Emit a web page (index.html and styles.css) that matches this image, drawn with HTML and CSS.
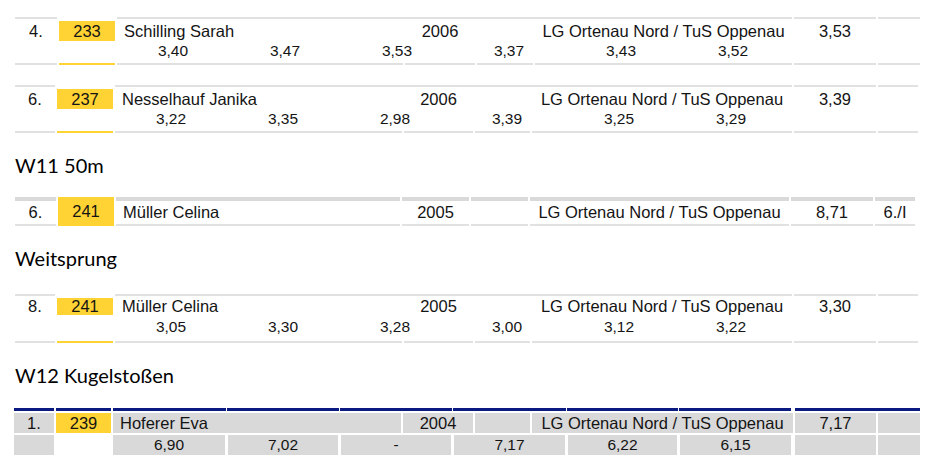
FILE: index.html
```html
<!DOCTYPE html>
<html lang="de">
<head>
<meta charset="utf-8">
<title>Ergebnisse</title>
<link rel="stylesheet" href="styles.css">
</head>
<body>
<main class="page">

  <section class="res b1">
    <span class="rule top c1"></span>
    <span class="rule top c3to6"></span>
    <span class="rule top c7"></span>
    <span class="rule top c8"></span>
    <div class="cell rank">4.</div>
    <div class="cell bib">233</div>
    <div class="cell name">Schilling Sarah</div>
    <div class="cell year">2006</div>
    <div class="cell gap"></div>
    <div class="cell club">LG Ortenau Nord / TuS Oppenau</div>
    <div class="cell best">3,53</div>
    <div class="cell extra"></div>
    <div class="attempts"><span>3,40</span><span>3,47</span><span>3,53</span><span>3,37</span><span>3,43</span><span>3,52</span></div>
    <span class="rule bot c1"></span>
    <span class="rule bot c2 yel"></span>
    <span class="rule bot c3"></span>
    <span class="rule bot c4"></span>
    <span class="rule bot c5"></span>
    <span class="rule bot c6"></span>
    <span class="rule bot c7"></span>
    <span class="rule bot c8"></span>
  </section>

  <section class="res b2">
    <span class="rule top c1"></span>
    <span class="rule top c3to6"></span>
    <span class="rule top c7"></span>
    <span class="rule top c8"></span>
    <div class="cell rank">6.</div>
    <div class="cell bib">237</div>
    <div class="cell name">Nesselhauf Janika</div>
    <div class="cell year">2006</div>
    <div class="cell gap"></div>
    <div class="cell club">LG Ortenau Nord / TuS Oppenau</div>
    <div class="cell best">3,39</div>
    <div class="cell extra"></div>
    <div class="attempts"><span>3,22</span><span>3,35</span><span>2,98</span><span>3,39</span><span>3,25</span><span>3,29</span></div>
    <span class="rule bot c1"></span>
    <span class="rule bot c2 yel"></span>
    <span class="rule bot c3"></span>
    <span class="rule bot c4"></span>
    <span class="rule bot c5"></span>
    <span class="rule bot c6"></span>
    <span class="rule bot c7"></span>
    <span class="rule bot c8"></span>
  </section>

  <h2 class="heading">W11 50m</h2>

  <section class="res b3">
    <span class="rule top c1"></span>
    <span class="rule top c3"></span>
    <span class="rule top c4"></span>
    <span class="rule top c5"></span>
    <span class="rule top c6"></span>
    <span class="rule top c7"></span>
    <span class="rule top c8"></span>
    <div class="cell rank">6.</div>
    <div class="cell bib">241</div>
    <div class="cell name">Müller Celina</div>
    <div class="cell year">2005</div>
    <div class="cell gap"></div>
    <div class="cell club">LG Ortenau Nord / TuS Oppenau</div>
    <div class="cell best">8,71</div>
    <div class="cell extra">6./I</div>
    <span class="rule bot c1"></span>
    <span class="rule bot c3"></span>
    <span class="rule bot c4"></span>
    <span class="rule bot c5"></span>
    <span class="rule bot c6"></span>
    <span class="rule bot c7"></span>
    <span class="rule bot c8"></span>
  </section>

  <h2 class="heading">Weitsprung</h2>

  <section class="res b4">
    <span class="rule top c1"></span>
    <span class="rule top c3to6"></span>
    <span class="rule top c7"></span>
    <span class="rule top c8"></span>
    <div class="cell rank">8.</div>
    <div class="cell bib">241</div>
    <div class="cell name">Müller Celina</div>
    <div class="cell year">2005</div>
    <div class="cell gap"></div>
    <div class="cell club">LG Ortenau Nord / TuS Oppenau</div>
    <div class="cell best">3,30</div>
    <div class="cell extra"></div>
    <div class="attempts"><span>3,05</span><span>3,30</span><span>3,28</span><span>3,00</span><span>3,12</span><span>3,22</span></div>
    <span class="rule bot c1"></span>
    <span class="rule bot c2 yel"></span>
    <span class="rule bot c3"></span>
    <span class="rule bot c4"></span>
    <span class="rule bot c5"></span>
    <span class="rule bot c6"></span>
    <span class="rule bot c7"></span>
    <span class="rule bot c8"></span>
  </section>

  <h2 class="heading">W12 Kugelstoßen</h2>

  <section class="res b5">
    <span class="nav c1"></span>
    <span class="nav c2"></span>
    <div class="navsplit"><span></span><span></span><span></span><span></span><span></span><span></span></div>
    <span class="nav c7to8"></span>
    <div class="cell rank">1.</div>
    <div class="cell bib">239</div>
    <div class="cell name">Hoferer Eva</div>
    <div class="cell year">2004</div>
    <div class="cell gap"></div>
    <div class="cell club">LG Ortenau Nord / TuS Oppenau</div>
    <div class="cell best">7,17</div>
    <div class="cell extra"></div>
    <div class="sub c1"></div>
    <div class="attempts"><span>6,90</span><span>7,02</span><span>-</span><span>7,17</span><span>6,22</span><span>6,15</span></div>
    <div class="sub c7"></div>
    <div class="sub c8"></div>
  </section>

</main>
</body>
</html>
```

FILE: styles.css
```css
* { box-sizing: border-box; }

html, body {
  margin: 0;
  padding: 0;
  background: #ffffff;
}

body {
  width: 940px;
  height: 474px;
  overflow: hidden;
  font-family: "Liberation Sans", Arial, sans-serif;
  color: #141414;
}

.page {
  display: flex;
  flex-direction: column;
  padding-top: 17px;
}

/* ---------- headings ---------- */
.heading {
  margin: 20px 0 0 15px;
  font-family: Lato, "Open Sans", sans-serif;
  font-weight: 400;
  font-size: 20px;
  line-height: 24px;
  height: 24px;
  color: #000;
}

/* ---------- result blocks ---------- */
.res {
  display: grid;
  column-gap: 2px;
  align-items: stretch;
}

.res + .res { margin-top: 20px; }
.heading + .res { margin-top: 20px; }

.cell {
  grid-row: 2;
  font-size: 16.5px;
  line-height: 20px;
  text-align: center;
  white-space: nowrap;
}

.rank  { grid-column: 1; }
.bib   { grid-column: 2; background: #ffd333; }
.name  { grid-column: 3; text-align: left; padding-left: 7px; }
.year  { grid-column: 4; }
.gap   { grid-column: 5; }
.club  { grid-column: 6; }
.best  { grid-column: 7; }
.extra { grid-column: 8; }

.attempts {
  grid-row: 3;
  grid-column: 3 / 9;
  display: grid;
  grid-template-columns: repeat(6, 112px);
  font-size: 15.5px;
  line-height: 20px;
  text-align: center;
}

/* rules */
.rule {
  display: block;
  height: 2px;
  background: #e1e1e1;
}
.rule.top { grid-row: 1; margin-bottom: 2px; }
.rule.bot { grid-row: 4; margin-top: 2px; }
.rule.yel { background: #ffd333; }

.c1 { grid-column: 1; }
.c2 { grid-column: 2; }
.c3 { grid-column: 3; }
.c4 { grid-column: 4; }
.c5 { grid-column: 5; }
.c6 { grid-column: 6; }
.c7 { grid-column: 7; }
.c8 { grid-column: 8; }
.c3to6 { grid-column: 3 / 7; }
.c7to8 { grid-column: 7 / 9; }

/* block 1 */
.b1 {
  margin-left: 15px;
  grid-template-columns: 42px 56px 286px 70px 56px 257px 82px 42px;
}

/* blocks 2 and 4 */
.b2, .b4 {
  margin-left: 15px;
  grid-template-columns: 40px 56px 287px 69px 55px 260px 82px 40px;
}

.b4 { margin-top: 24px !important; }
.b4 .cell { line-height: 17px; }
.b4 .attempts { line-height: 24px; }

/* block 3 : W11 50m (single row, cut-off row above) */
.b3 {
  margin-left: 15px;
  grid-template-columns: 41px 56px 284px 67px 57px 259px 82px 40px;
}
.b3 .rule.top { height: 4px; margin-bottom: 0; background: #d9d9d9; }
.b3 .rule.bot { grid-row: 3; margin-top: 0; }
.b3 .cell { line-height: 23px; }
.b3 .bib {
  grid-row: 1 / 4;
  display: flex;
  align-items: center;
  justify-content: center;
}

/* block 5 : grey table with navy header */
.b5 {
  margin-left: 14px;
  margin-top: 21px !important;
  grid-template-columns: 40px 55px 288px 70px 55px 261px 81px 42px;
}
.nav {
  grid-row: 1;
  display: block;
  height: 3px;
  margin-bottom: 2px;
  background: #0a1a80;
}
.navsplit {
  grid-row: 1;
  grid-column: 3 / 7;
  display: grid;
  grid-template-columns: 113px 112px 112px 113px 111px 112px;
  column-gap: 1px;
  height: 3px;
}
.navsplit span { background: #0a1a80; }

.b5 .cell { background: #d9d9d9; }
.b5 .bib { background: #ffd333; }

.sub {
  grid-row: 3;
  margin-top: 2px;
  height: 20px;
  background: #d9d9d9;
}
.b5 .attempts {
  grid-column: 3 / 7;
  margin-top: 2px;
  grid-template-columns: 112px 110px 110px 111px 109px 111px;
  column-gap: 3px;
}
.b5 .attempts span { background: #d9d9d9; }
```
